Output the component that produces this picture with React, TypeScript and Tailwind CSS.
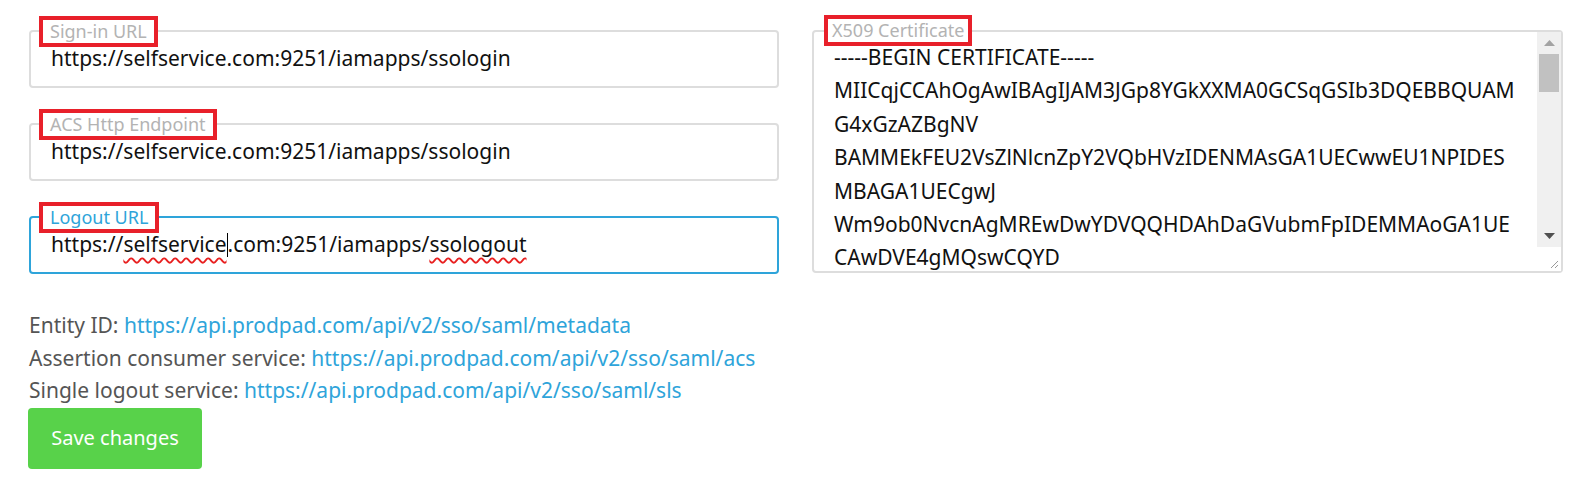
import React from "react";

const certLines = [
  "-----BEGIN CERTIFICATE-----",
  "MIICqjCCAhOgAwIBAgIJAM3JGp8YGkXXMA0GCSqGSIb3DQEBBQUAM",
  "G4xGzAZBgNV",
  "BAMMEkFEU2VsZlNlcnZpY2VQbHVzIDENMAsGA1UECwwEU1NPIDES",
  "MBAGA1UECgwJ",
  "Wm9ob0NvcnAgMREwDwYDVQQHDAhDaGVubmFpIDEMMAoGA1UE",
  "CAwDVE4gMQswCQYD",
];

function Label({ text, active }: { text: string; active?: boolean }) {
  return (
    <span
      className={`absolute left-[8px] -top-[16px] border-4 border-[#e8202a] bg-white px-[7px] text-[18px] leading-[23px] ${
        active ? "text-[#2ea4da]" : "text-[#b3b3b3]"
      }`}
    >
      {text}
    </span>
  );
}

function Field({ label, children, active }: { label: string; children: React.ReactNode; active?: boolean }) {
  return (
    <div
      className={`relative flex h-[58px] items-center rounded-[4px] border-2 pl-5 text-[21px] text-[#111] ${
        active ? "border-[#2ea4da]" : "border-[#dddddd]"
      }`}
    >
      <Label text={label} active={active} />
      {children}
    </div>
  );
}

const squiggle = "underline decoration-wavy decoration-[#e82020] decoration-[1.5px] underline-offset-[5px]";

export default function App() {
  return (
    <div className="min-h-[480px] bg-white pt-[30px] font-['Noto_Sans','Open_Sans',sans-serif]">
      <div className="grid grid-cols-[750px_751px] gap-x-[33px] pl-[29px] pr-[22px]">
        {/* left column */}
        <div className="flex flex-col gap-[35px]">
          <Field label="Sign-in URL">https://selfservice.com:9251/iamapps/ssologin</Field>
          <Field label="ACS Http Endpoint">https://selfservice.com:9251/iamapps/ssologin</Field>
          <Field label="Logout URL" active>
            <span>https://</span>
            <span className={squiggle}>selfservice</span>
            <span className="inline-block h-[24px] w-px bg-black" />
            <span>.com:9251/iamapps/</span>
            <span className={squiggle}>ssologout</span>
          </Field>
        </div>

        {/* certificate */}
        <div className="relative flex h-[243px] rounded-[4px] border-2 border-[#dddddd] text-[21px] text-[#111]">
          <span className="absolute left-[10px] -top-[17px] z-10 border-4 border-[#e8202a] bg-white px-[4px] text-[18px] leading-[23px] text-[#b3b3b3]">
            X509 Certificate
          </span>
          <div className="flex-1 overflow-hidden pl-5 pt-[9px] leading-[33.4px]">
            {certLines.map((l) => (
              <div key={l} className="whitespace-nowrap">
                {l}
              </div>
            ))}
          </div>
          <div className="flex w-[24px] flex-col bg-[#f0f0f0]">
            <div className="flex h-[22px] items-center justify-center">
              <svg width="11" height="6" viewBox="0 0 11 6">
                <path d="M0 6 L5.5 0 L11 6 Z" fill="#a3a3a3" />
              </svg>
            </div>
            <div className="mx-[2px] h-[38px] bg-[#c1c1c1]" />
            <div className="flex-1" />
            <div className="flex h-[22px] items-center justify-center">
              <svg width="11" height="6" viewBox="0 0 11 6">
                <path d="M0 0 L11 0 L5.5 6 Z" fill="#505050" />
              </svg>
            </div>
            <div className="relative h-[24px] bg-white">
              <svg className="absolute bottom-[2px] right-[2px]" width="9" height="9" viewBox="0 0 9 9">
                <path d="M1 8 L8 1 M5 8 L8 5" stroke="#9a9a9a" strokeWidth="1" />
              </svg>
            </div>
          </div>
        </div>
      </div>

      {/* info */}
      <div className="mt-[35px] pl-[29px] text-[21px] leading-[32.5px] text-[#555]">
        <div>
          Entity ID: <span className="text-[#2ea4da]">https://api.prodpad.com/api/v2/sso/saml/metadata</span>
        </div>
        <div>
          Assertion consumer service: <span className="text-[#2ea4da]">https://api.prodpad.com/api/v2/sso/saml/acs</span>
        </div>
        <div>
          Single logout service: <span className="text-[#2ea4da]">https://api.prodpad.com/api/v2/sso/saml/sls</span>
        </div>
        <button className="mt-[1px] -ml-px h-[61px] w-[174px] rounded-[4px] bg-[#58d24a] text-[20px] text-white">
          Save changes
        </button>
      </div>
    </div>
  );
}
